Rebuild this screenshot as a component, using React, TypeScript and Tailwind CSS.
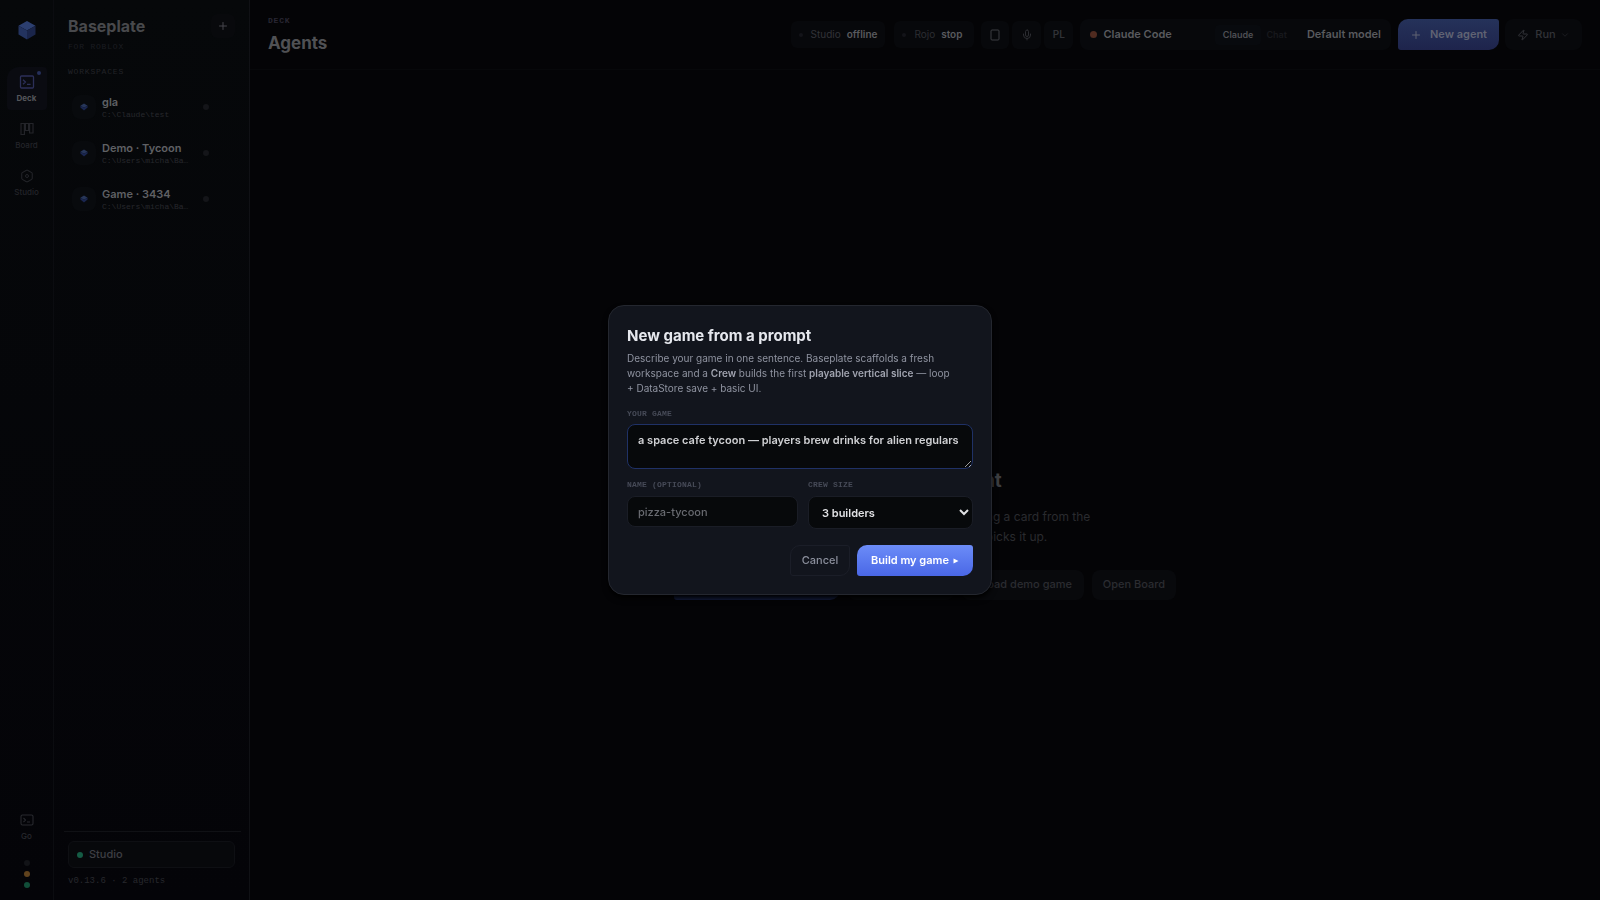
import React from "react";
import { Plus, Mic, Zap, ChevronDown, Hexagon } from "lucide-react";

const mono = "font-['Liberation_Mono',monospace]";

function Cube({ className }: { className: string }) {
  return (
    <svg viewBox="0 0 20 20" className={className} aria-hidden="true">
      <path d="M10 1 18.5 5.8 10 10.5 1.5 5.8Z" fill="#2c3f70" />
      <path d="M1.5 5.8 10 10.5V19.5L1.5 14.5Z" fill="#23335f" />
      <path d="M18.5 5.8 10 10.5V19.5l8.5-5Z" fill="#1a254a" />
    </svg>
  );
}

function Gem() {
  return (
    <svg viewBox="0 0 10 10" className="h-2 w-2" aria-hidden="true">
      <path d="M5 0.5 9.5 3.5 5 6 0.5 3.5Z" fill="#273659" />
      <path d="M0.5 3.5 5 6 9.5 3.5V5.5L5 9.5 0.5 5.5Z" fill="#1a2650" />
    </svg>
  );
}

function DeckIcon() {
  return (
    <svg viewBox="0 0 16 16" className="h-4 w-4 text-[#2c2f58]" fill="none" stroke="currentColor" strokeWidth="1.3" aria-hidden="true">
      <rect x="1.5" y="2" width="13" height="12" rx="1" />
      <path d="M4 5.8 6.4 8 4 10.2M8 10.3h3.6" />
    </svg>
  );
}

function BoardIcon() {
  return (
    <svg viewBox="0 0 16 16" className="h-4 w-4" fill="none" stroke="currentColor" strokeWidth="1.2" aria-hidden="true">
      <path d="M2 2.5h3.4v11H2zM6.4 2.5h3.2v7H6.4zM10.6 2.5H14v9.5h-3.4z" />
    </svg>
  );
}

function StudioIcon() {
  return (
    <span className="grid h-4 w-4 place-items-center">
      <Hexagon className="col-start-1 row-start-1 h-3.5 w-3.5" strokeWidth={1.8} />
      <span className="col-start-1 row-start-1 h-1 w-1 rounded-full border border-current" />
    </span>
  );
}

const workspaces = [
  { name: "gla", path: "C:\\Claude\\test" },
  { name: "Demo · Tycoon", path: "C:\\Users\\micha\\Ba…" },
  { name: "Game · 3434", path: "C:\\Users\\micha\\Ba…" },
];

function Rail() {
  return (
    <nav aria-label="Sections" className="flex w-[54px] shrink-0 flex-col items-center border-r border-[#0b0c10] bg-linear-to-b from-[#06080a] to-[#040408] pt-5 pb-3">
      <Cube className="h-5 w-5" />
      <div className="mt-[27px] flex flex-col gap-1">
        <button className="relative flex h-[43px] w-10 flex-col items-center justify-center gap-0.5 rounded-tl-xl rounded-tr rounded-br rounded-bl bg-[#0a0b11] text-[8px] leading-3 font-bold text-[#55565b]">
          <DeckIcon />
          Deck
          <span className="absolute top-1 right-1.5 h-1 w-1 rounded-full bg-[#26305a]" />
        </button>
        <button className="flex h-[43px] w-10 flex-col items-center justify-center gap-0.5 text-[8px] leading-3 font-medium text-[#232429]">
          <BoardIcon />
          Board
        </button>
        <button className="flex h-[43px] w-10 flex-col items-center justify-center gap-0.5 text-[8px] leading-3 font-medium text-[#232429]">
          <StudioIcon />
          Studio
        </button>
      </div>
      <button className="mt-auto flex flex-col items-center gap-1 text-[8px] leading-3 font-medium text-[#28292e]">
        <svg viewBox="0 0 14 12" className="h-3 w-3.5" fill="none" stroke="currentColor" strokeWidth="1.1" aria-hidden="true">
          <rect x="1" y="1" width="12" height="10" rx="1.5" />
          <path d="M3.5 4 5.5 6l-2 2M7 8h3" />
        </svg>
        Go
      </button>
      <div className="mt-[18px] flex flex-col gap-[5px]">
        <span className="h-1.5 w-1.5 rounded-full bg-[#121317]" />
        <span className="h-1.5 w-1.5 rounded-full bg-[#60421d]" />
        <span className="h-1.5 w-1.5 rounded-full bg-[#114e39]" />
      </div>
    </nav>
  );
}

function Sidebar() {
  return (
    <aside className="flex w-[196px] shrink-0 flex-col border-r border-[#101115] bg-linear-to-b from-[#06080a] to-[#040408] pt-[14px] pb-[13px]">
      <div className="flex items-start justify-between pr-[14px] pl-[14px]">
        <div>
          <div className="text-[16px] leading-6 font-bold text-[#48494c]">Baseplate</div>
          <div className={`mt-1 text-[8px] leading-[10px] tracking-widest text-[#1b1c21] ${mono}`}>FOR ROBLOX</div>
        </div>
        <button aria-label="Add workspace" className="grid h-6 w-6 place-items-center rounded-md bg-[#08090c] text-[#46474c]">
          <Plus className="h-3 w-3" />
        </button>
      </div>
      <h2 className={`mt-[15px] pl-[14px] text-[8px] leading-[10px] tracking-widest text-[#222328] ${mono}`}>WORKSPACES</h2>
      <ul className="mt-[7px] flex flex-col pr-10 pl-[18px]">
        {workspaces.map((w) => (
          <li key={w.path + w.name} className="flex h-[46px] items-center">
            <span className="grid h-6 w-6 shrink-0 place-items-center rounded-lg bg-[#080a0d]">
              <Gem />
            </span>
            <div className="ml-[6px]">
              <div className="text-[11px] leading-4 font-semibold whitespace-nowrap text-[#5f6064]">{w.name}</div>
              <div className={`text-[8px] leading-[10px] whitespace-nowrap text-[#27282d] ${mono}`}>{w.path}</div>
            </div>
            <span className="ml-auto h-1.5 w-1.5 shrink-0 rounded-full bg-[#141519]" />
          </li>
        ))}
      </ul>
      <div className="mt-auto mr-2 ml-[10px] border-t border-[#101115]" />
      <div className="mt-[9px] mr-[14px] ml-[14px] flex h-[27px] items-center gap-1.5 rounded-md border border-[#0e0f13] bg-[#07080b] pl-2 text-[11px] font-medium text-[#3e3f44]">
        <span className="h-1.5 w-1.5 rounded-full bg-[#155c45]" />
        Studio
      </div>
      <div className={`mt-[7px] pl-[14px] text-[9px] leading-[12px] text-[#27282d] ${mono}`}>v0.13.6 · 2 agents</div>
    </aside>
  );
}

function Header() {
  return (
    <header className="flex h-[70px] shrink-0 items-start justify-between border-b border-[#07080a] pr-[18px] pl-[18px]">
      <div className="pt-4">
        <div className={`text-[8px] leading-[10px] font-bold tracking-widest text-[#282632] ${mono}`}>DECK</div>
        <h1 className="mt-[5px] text-[17px] leading-6 font-bold text-[#505154]">Agents</h1>
      </div>
      <div className="flex items-center pt-[19px] text-[11px]">
        <div className="flex h-[27px] items-center rounded-md bg-[#07080b] pr-2 pl-2 text-[10px] text-[#323338]">
          <span className="mr-2 h-1 w-1 rounded-full bg-[#131419]" />
          Studio <b className="ml-1.5 font-semibold text-[#595a5e]">offline</b>
        </div>
        <div className="ml-[9px] flex h-[27px] items-center rounded-md bg-[#07080b] pr-3 pl-2 text-[10px] text-[#2c2d32]">
          <span className="mr-2 h-1 w-1 rounded-full bg-[#131419]" />
          Rojo <b className="ml-1.5 font-semibold text-[#595a5e]">stop</b>
        </div>
        <button aria-label="Panel" className="ml-[7px] grid h-[28px] w-[28px] place-items-center rounded-md bg-[#07080b] text-[#3c3d42]">
          <svg viewBox="0 0 12 12" className="h-3 w-3" fill="none" stroke="currentColor" aria-hidden="true">
            <rect x="2" y="1" width="8" height="10" rx="1" />
          </svg>
        </button>
        <button aria-label="Voice" className="ml-[3px] grid h-[28px] w-[29px] place-items-center rounded-md bg-[#07080b] text-[#2c2d32]">
          <Mic className="h-3 w-3" />
        </button>
        <button className="ml-[3px] h-[28px] w-[29px] rounded-md bg-[#07080b] text-[10px] font-semibold text-[#313237]">PL</button>
        <div className="ml-[7px] flex h-[31px] items-center rounded-lg bg-[#07080b] pr-[10px] pl-[10px] font-semibold text-[#595a5e]">
          <span className="h-[7px] w-[7px] rounded-sm bg-[#502b20]" />
          <span className="ml-1.5">Claude Code</span>
          <span className="ml-[43px] rounded bg-[#080a0e] px-2 py-1 text-[9px] leading-3 text-[#4e4f54]">Claude</span>
          <span className="ml-[5px] text-[9px] leading-3 text-[#17181d]">Chat</span>
          <span className="ml-5">Default model</span>
        </div>
        <button className="ml-[7px] flex h-[31px] w-[101px] items-center justify-center gap-2 rounded-tl-[10px] rounded-tr-[3px] rounded-br-[10px] rounded-bl-[3px] bg-linear-to-b from-[#25325a] to-[#1e244c] font-semibold text-[#606373]">
          <Plus className="h-3 w-3" />
          New agent
        </button>
        <button className="ml-[6px] flex h-[31px] w-[77px] items-center justify-center gap-1.5 rounded-lg bg-[#07080b] font-medium text-[#323338]">
          <Zap className="h-3 w-3" />
          Run
          <ChevronDown className="-ml-0.5 h-2.5 w-2.5 text-[#1e1f24]" />
        </button>
      </div>
    </header>
  );
}

function EmptyState() {
  return (
    <section className="flex flex-1 flex-col items-center justify-center text-center">
      <div className="grid h-16 w-16 place-items-center rounded-2xl bg-[#07080b]">
        <Cube className="h-8 w-8" />
      </div>
      <h2 className="mt-[34px] text-[19px] leading-6 font-bold text-[#3c3d40]">Launch an agent</h2>
      <p className="mt-[14px] text-[12px] leading-5 text-[#2a2b2f]">
        Describe a task to launch an agent or drag a card from the
        <br />
        Board, and your next free agent picks it up.
      </p>
      <div className="mt-[23px] flex h-[30px] items-stretch gap-2 text-[11px] font-medium text-[#2b2c31]">
        <button className="w-[166px] rounded-tl-[10px] rounded-tr-[3px] rounded-br-[10px] rounded-bl-[3px] bg-[#141d3f]">New game</button>
        <button className="w-[106px] rounded-lg bg-[#07080b]">New agent</button>
        <button className="w-[122px] rounded-lg bg-[#08090c] pr-3 text-right">Load demo game</button>
        <button className="w-[84px] rounded-lg bg-[#08090c]">Open Board</button>
      </div>
    </section>
  );
}

function NewGameDialog() {
  const label = `block text-[8px] leading-[10px] font-bold tracking-wide text-[#464a57] ${mono}`;
  return (
    <div className="fixed inset-0 flex items-center justify-center">
      <form
        role="dialog"
        aria-labelledby="dialog-title"
        onSubmit={(e) => e.preventDefault()}
        className="w-[384px] rounded-2xl border border-[#24272f] bg-[#12151d] px-[18px] pt-[18px] pb-[18px] shadow-md shadow-black"
      >
        <h2 id="dialog-title" className="text-[15px] leading-6 font-bold text-[#e6e8ee]">New game from a prompt</h2>
        <p className="mt-[3px] text-[10px] leading-[15px] text-[#8f93a0]">
          Describe your game in one sentence. Baseplate scaffolds a fresh
          <br />
          workspace and a <b className="font-semibold text-[#a0a3af]">Crew</b> builds the first{" "}
          <b className="font-semibold text-[#a0a3af]">playable vertical slice</b> — loop
          <br />+ DataStore save + basic UI.
        </p>
        <label htmlFor="game" className={`mt-[13px] ${label}`}>YOUR GAME</label>
        <textarea
          id="game"
          defaultValue="a space cafe tycoon — players brew drinks for alien regulars"
          className="mt-[5px] block h-[45px] w-full resize rounded-lg border border-[#1f3166] bg-[#07090b] px-[10px] py-[7px] text-[11px] leading-4 font-semibold text-[#cfd0d3] outline-none"
        />
        <div className="mt-[11px] flex gap-[10px]">
          <div className="flex-[171]">
            <label htmlFor="name" className={label}>NAME (OPTIONAL)</label>
            <input
              id="name"
              placeholder="pizza-tycoon"
              className="mt-[6px] block h-[31px] w-full rounded-lg border border-[#1a1d26] bg-[#07090b] px-[10px] text-[11px] font-medium text-[#d6d7da] placeholder:text-[#686a70]"
            />
          </div>
          <div className="flex-[165]">
            <label htmlFor="crew" className={label}>CREW SIZE</label>
            <select
              id="crew"
              className="mt-[6px] block h-[33px] w-full rounded-lg border border-[#1a1d26] bg-[#07090b] pl-[9px] text-[11px] font-semibold text-[#e0e1e4]"
            >
              <option>3 builders</option>
            </select>
          </div>
        </div>
        <div className="mt-4 flex justify-end gap-[7px] text-[11px]">
          <button type="button" className="h-[31px] w-[60px] rounded-tl-[10px] rounded-tr-[3px] rounded-br-[10px] rounded-bl-[3px] border border-[#1b1e28] font-medium text-[#8b8f9c]">
            Cancel
          </button>
          <button type="submit" className="flex h-[31px] w-[116px] items-center justify-center gap-1 rounded-tl-[10px] rounded-tr-[3px] rounded-br-[10px] rounded-bl-[3px] bg-linear-to-b from-[#6c8cf8] to-[#4a67e6] font-semibold text-white">
            Build my game
            <svg viewBox="0 0 6 6" className="h-1.5 w-1.5" fill="currentColor" aria-hidden="true">
              <path d="M0.5 0.5 5.5 3 0.5 5.5Z" />
            </svg>
          </button>
        </div>
      </form>
    </div>
  );
}

export default function App() {
  return (
    <div className="flex min-h-screen bg-[#040406] font-['Inter',sans-serif]">
      <Rail />
      <Sidebar />
      <main className="flex min-w-0 flex-1 flex-col">
        <Header />
        <EmptyState />
      </main>
      <NewGameDialog />
    </div>
  );
}
